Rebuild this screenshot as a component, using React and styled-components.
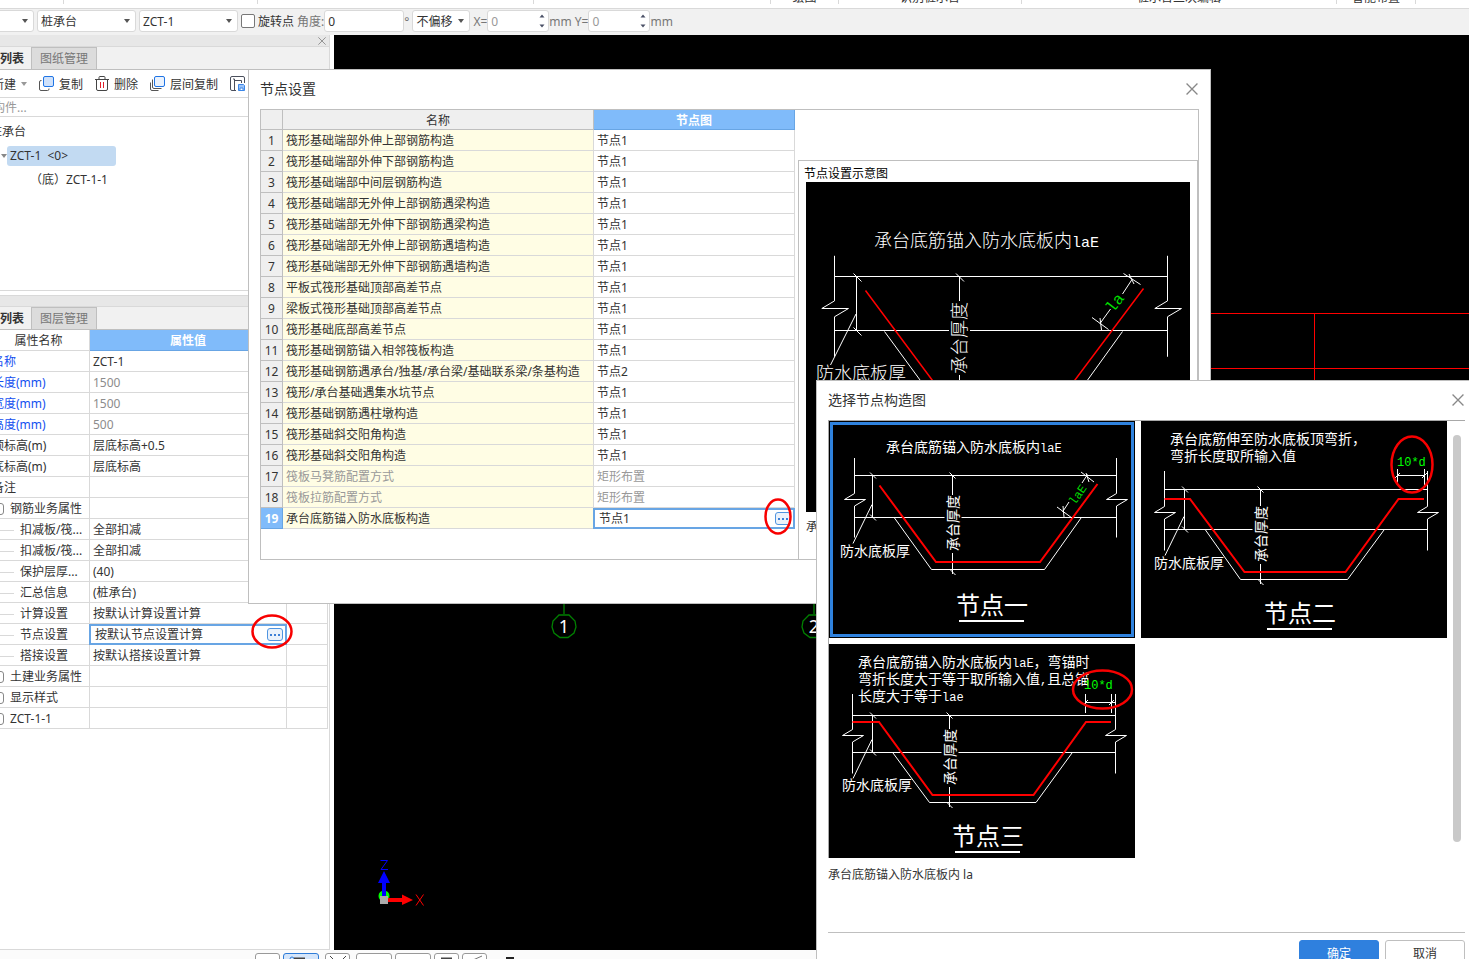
import React from "react";
import styled, { createGlobalStyle, css } from "styled-components";

const Global = createGlobalStyle`
  * { box-sizing: border-box; }
  body {
    margin: 0;
    overflow: hidden;
    background: #fff;
    color: #333;
    font: 12px/18px "Noto Sans", "Noto Sans CJK SC", sans-serif;
  }
  button, input, select { font: inherit; color: inherit; margin: 0; padding: 0; }
  button { background: none; border: 0; text-align: left; }
  svg { display: block; flex: none; }
`;

const blue = "#68a5e4";
const line = "#d9d9d9";
const frame = "#bfbfbf";

const Screen = styled.div`
  position: relative;
  height: 100vh;
  display: flex;
  flex-direction: column;
  overflow: hidden;
`;

/* ---------- ribbon captions ---------- */

const Ribbon = styled.div`
  flex: none;
  height: 9px;
  display: flex;
  align-items: flex-end;
  padding-bottom: 4px;
  overflow: hidden;
  background: #fff;
  border-bottom: 1px solid ${line};
`;

const RibbonGroup = styled.div`
  flex: 0 0 ${(p) => p.$w}px;
  height: 18px;
  text-align: center;
  line-height: 24px;
  border-right: 1px solid ${line};
  white-space: nowrap;
`;

/* ---------- option bar ---------- */

const OptionBar = styled.div`
  flex: none;
  height: 26px;
  display: flex;
  align-items: center;
  gap: 3px;
  padding-bottom: 2px;
  margin-left: -12px;
  background: #f1f1f1;
  white-space: nowrap;
`;

const SelectBox = styled.div`
  display: grid;
  align-items: center;
  width: ${(p) => p.$w}px;
  height: 22px;
  background: #fff;
  border: 1px solid ${line};
  border-radius: 3px;
  & > * { grid-area: 1 / 1; }
  svg { justify-self: end; margin-right: 5px; pointer-events: none; }
`;

const Select = styled.select`
  appearance: none;
  width: 100%;
  height: 20px;
  padding: 2px 0 0 3px;
  border: 0;
  background: transparent;
`;

const CheckBox = styled.input`
  appearance: none;
  width: 14px;
  height: 14px;
  border: 1px solid #777;
  border-radius: 2px;
  background: #fff;
`;

const Label = styled.label`
  padding-top: 2px;
  color: ${(p) => (p.$muted ? "#777" : "#333")};
`;

const Unit = styled.span`
  padding-top: 2px;
`;

const FieldGroup = styled.div`
  display: flex;
  align-items: center;
  color: #777;
`;

const Field = styled.div`
  display: flex;
  align-items: center;
  justify-content: space-between;
  width: ${(p) => p.$w}px;
  height: 22px;
  padding: 0 3px;
  background: #fff;
  border: 1px solid ${line};
  border-radius: 3px;
  color: ${(p) => (p.$muted ? "#999" : "#333")};
`;

const Input = styled.input`
  flex: 1;
  min-width: 0;
  width: 100%;
  padding-top: 1px;
  border: 0;
  outline: 0;
  background: transparent;
`;

/* ---------- workspace ---------- */

const Workspace = styled.div`
  flex: 1;
  min-height: 0;
  display: flex;
`;

const SidePanel = styled.aside`
  flex: 0 0 342px;
  margin: 0 4px 0 -12px;
  display: flex;
  flex-direction: column;
  border-right: 1px solid ${line};
  border-bottom: 1px solid ${line};
`;

const Grip = styled.div`
  flex: none;
  height: 12px;
  display: flex;
  align-items: center;
  justify-content: flex-end;
  padding-right: 3px;
  background: #e7e7e7;
  border: solid ${line};
  border-width: ${(p) => (p.$top ? "1px 0" : "0 0 1px")};
`;

const Tabs = styled.div`
  flex: none;
  display: flex;
  height: 23px;
  background: #f1f1f1;
  border-bottom: 1px solid ${frame};
`;

const Tab = styled.button`
  height: 22px;
  padding: ${(p) => (p.$active ? "2px 7px 0 12px" : "1px 8px 0")};
  font-weight: ${(p) => (p.$active ? 700 : 400)};
  color: ${(p) => (p.$active ? "#333" : "#777")};
  background: ${(p) => (p.$active ? "#f1f1f1" : "#dcdcdc")};
  border: solid ${frame};
  border-width: ${(p) => (p.$active ? "0" : "1px 1px 0")};
`;

const Tools = styled.div`
  flex: none;
  height: 28px;
  display: flex;
  align-items: center;
  gap: 12px;
  padding-left: 4px;
  border-bottom: 1px solid ${line};
  overflow: hidden;
`;

const Tool = styled.button`
  flex: none;
  display: flex;
  align-items: center;
  gap: 5px;
  white-space: nowrap;
`;

const ToolText = styled.span`
  padding-top: 2px;
`;

const Search = styled.input`
  flex: none;
  height: 19px;
  && { padding: 1px 0 0 5px; }
  border: 0;
  border-bottom: 1px solid ${line};
  outline: 0;
  &::placeholder { color: #999; opacity: 1; }
`;

const Tree = styled.div`
  flex: none;
  height: 174px;
  padding-top: 3px;
  border-bottom: 1px solid ${line};
  margin-bottom: 4px;
`;

const TreeItem = styled.div`
  display: flex;
  align-items: center;
  height: 24px;
  padding-left: ${(p) => p.$indent}px;
`;

const TreeChip = styled.span`
  width: 109px;
  padding-left: 3px;
  line-height: 20px;
  background: #c2daf2;
  border-radius: 3px;
  white-space: pre;
`;

const PropTable = styled.table`
  table-layout: fixed;
  width: 340px;
  border-collapse: separate;
  border-spacing: 0;
  white-space: nowrap;
`;

const cell = css`
  padding: 2px 0 0;
  height: 21px;
  line-height: 18px;
  font-weight: 400;
  border: solid ${line};
  border-width: 0 1px 1px 0;
`;

const highlighted = css`
  font-weight: 700;
  color: #fff;
  background: #80bbfa;
  border-color: ${blue};
`;

const PropHead = styled.th`
  ${cell}
  text-align: center;
  ${(p) => p.$active && highlighted}
`;

const PropName = styled.th`
  ${cell}
  text-align: left;
  color: ${(p) => (p.$link ? "#1450f0" : "#333")};
`;

const NameInner = styled.div`
  display: flex;
  align-items: center;
  gap: 6px;
  padding-left: 4px;
`;

const Branch = styled.span`
  width: 22px;
  border-top: 1px solid ${line};
`;

const Expander = styled.button`
  width: 12px;
  height: 12px;
  background: #fff;
  border: 1px solid #888;
  border-radius: 3px;
`;

const editingCell = css`
  padding: 0;
  border-width: 0;
`;

const PropValue = styled.td`
  ${cell}
  padding-left: 3px;
  color: ${(p) => (p.$muted ? "#8c8c8c" : "#333")};
  ${(p) => p.$editing && editingCell}
`;

const Editor = styled.div`
  position: relative;
  display: flex;
  align-items: center;
  height: 21px;
  padding: 0 2px 0 4px;
  margin-left: -1px;
  background: #fff;
  border: 2px solid ${blue};
`;

const MoreButton = styled.button`
  flex: none;
  width: 16px;
  height: 13px;
  display: flex;
  align-items: center;
  justify-content: center;
  border: 1px solid #4f94e0;
  border-radius: 3px;
  background: #ebf2fb;
`;

/* pen mark lying over the button it points at */
const Mark = styled.svg`
  position: absolute;
  top: -12px;
  right: ${(p) => p.$right}px;
  pointer-events: none;
`;

const Canvas = styled.main`
  flex: 1;
  min-width: 0;
  background: #000;
  svg { width: 100%; height: 100%; }
`;

const StatusBar = styled.footer`
  flex: none;
  height: 9px;
  display: flex;
  gap: 3px;
  padding: 3px 0 0 255px;
  overflow: hidden;
  background: #fbfbfb;
`;

const StatusButton = styled.button`
  flex: none;
  display: flex;
  justify-content: center;
  width: ${(p) => p.$w}px;
  height: 24px;
  margin-right: ${(p) => p.$after || 0}px;
  border: 1px solid ${(p) => (p.$active ? "#2e7cd8" : "#999")};
  border-radius: 3px;
  background: ${(p) => (p.$active ? "#d5e6fb" : "#fff")};
`;

/* ---------- dialogs ---------- */

const Dialog = styled.section`
  position: absolute;
  display: flex;
  flex-direction: column;
  background: #fff;
  border: 1px solid ${frame};
  padding: 0 11px;
`;

const SettingsDialog = styled(Dialog)`
  left: 248px;
  top: 69px;
  width: 963px;
  padding-bottom: 43px;
`;

const PickerDialog = styled(Dialog)`
  left: 816px;
  right: -8px;
  top: 380px;
`;

const DialogHead = styled.header`
  flex: none;
  height: 39px;
  display: flex;
  align-items: center;
  justify-content: space-between;
  padding: 0 1px 2px 0;
`;

const DialogTitle = styled.h2`
  margin: 0;
  font-size: 14px;
  font-weight: 400;
`;

const SettingsBody = styled.div`
  display: flex;
  gap: 3px;
  min-height: 451px;
  border: 1px solid ${frame};
`;

const NodeTable = styled.table`
  flex: none;
  align-self: flex-start;
  table-layout: fixed;
  width: 534px;
  border-collapse: separate;
  border-spacing: 0;
  white-space: nowrap;
`;

const NodeHead = styled.th`
  ${cell}
  height: 20px;
  line-height: 17px;
  background: #efefef;
  border-color: ${frame};
  ${(p) => p.$active && highlighted}
`;

const NodeIndex = styled.th`
  ${cell}
  text-align: center;
  background: #efefef;
  border-color: ${frame};
  ${(p) => p.$active && highlighted}
`;

const NodeName = styled.td`
  ${cell}
  padding-left: 3px;
  background: #fffde4;
  color: ${(p) => (p.$muted ? "#999" : "#333")};
`;

const NodeValue = styled.td`
  ${cell}
  padding-left: 3px;
  color: ${(p) => (p.$muted ? "#999" : "#333")};
  ${(p) => p.$editing && editingCell}
`;

const Preview = styled.div`
  flex: 1;
  min-width: 0;
  margin-top: 50px;
  padding: 3px 0 0 5px;
  border: solid ${frame};
  border-width: 1px 1px 0;
`;

const PreviewTitle = styled.div`
  height: 18px;
  line-height: 20px;
  color: #000;
`;

const PreviewFigure = styled.figure`
  margin: 0 0 0 2px;
`;

const PreviewCaption = styled.figcaption`
  line-height: 30px;
`;

const Gallery = styled.div`
  flex: none;
  display: flex;
  justify-content: space-between;
  align-items: flex-start;
  height: 438px;
  padding-right: 4px;
  overflow: hidden;
  border: solid #a8a8a8;
  border-width: 1px 0 0 1px;
`;

const Cards = styled.div`
  display: grid;
  grid-template-columns: repeat(2, 306px);
  gap: 6px;
`;

const Card = styled.button`
  background: #000;
`;

const Thumb = styled.div`
  width: 8px;
  height: 407px;
  margin-top: 14px;
  border-radius: 4px;
  background: #c9c9c9;
`;

const Note = styled.p`
  margin: 0;
  height: 74px;
  padding-top: 8px;
`;

const DialogFoot = styled.footer`
  display: flex;
  justify-content: flex-end;
  gap: 6px;
  padding: 7px 0 11px;
  border-top: 1px solid ${frame};
`;

const FootButton = styled.button`
  width: 80px;
  height: 26px;
  && { padding-top: 2px; }
  text-align: center;
  border-radius: 3px;
  border: 1px solid ${(p) => (p.$primary ? "#2f80de" : frame)};
  background: ${(p) => (p.$primary ? "#2f80de" : "#fff")};
  color: ${(p) => (p.$primary ? "#fff" : "#333")};
`;

/* ---------- small drawings ---------- */

const Caret = ({ color = "#555" }) => (
  <svg width="6" height="4" viewBox="0 0 6 4">
    <path d="M0 0h6L3 4z" fill={color} />
  </svg>
);

const Spin = () => (
  <svg width="6" height="14" viewBox="0 0 6 14">
    <path d="M0.5 3.5h5L3 0.5zM0.5 10.5h5L3 13.5z" fill="#4a5066" />
  </svg>
);

const Cross = ({ size }) => (
  <svg width={size} height={size} viewBox="0 0 11 11">
    <path d="M.5.5l10 10M10.5.5l-10 10" stroke="#888" strokeWidth="1.2" fill="none" />
  </svg>
);

const CopyIcon = ({ layered }) => (
  <svg width="15" height="15" viewBox="0 0 15 15" fill="none">
    <rect x="4.5" y=".5" width="10" height="10" rx="1.5" stroke="#1f74e4" fill={layered ? "#eaf2fd" : "#cfe1fa"} />
    {layered ? (
      <path d="M2.5 3.5v7.500a1.500 1.500 0 0 0 1.500 1.500h7.500M.5 6.500v6.500a1.500 1.500 0 0 0 1.500 1.500h6.500" stroke="#555" />
    ) : (
      <path d="M2.500 4.500H2A1.500 1.500 0 0 0 .5 6v7A1.500 1.500 0 0 0 2 14.500h6.500a1.500 1.500 0 0 0 1.500-1.500v-.5" stroke="#555" />
    )}
  </svg>
);

const TrashIcon = () => (
  <svg width="14" height="15" viewBox="0 0 14 15" fill="none">
    <path d="M0 3.500h14M4 3V1.500a1 1 0 0 1 1-1h4a1 1 0 0 1 1 1V3M1.500 3.500V13A1.500 1.500 0 0 0 3 14.500h8a1.500 1.500 0 0 0 1.500-1.500V3.500" stroke="#444" />
    <path d="M5.500 6v6M8.500 6v6" stroke="#e0202a" />
  </svg>
);

const SaveIcon = () => (
  <svg width="16" height="16" viewBox="0 0 16 16" fill="none">
    <path d="M6 14.500H2A1.500 1.500 0 0 1 .5 13V2A1.500 1.500 0 0 1 2 .5h11A1.500 1.500 0 0 1 14.500 2v5M4.500 3v11.500M4.500 4.500h7V7M3 3h1.500" stroke="#4a4f5c" />
    <path d="M8.500 8.500h5l1 1v5h-6z" fill="#9cc3f7" stroke="#3b86e8" />
    <path d="M10 12h3v2.500h-3z" fill="#fff" stroke="#3b86e8" />
  </svg>
);

const Dots = () => (
  <svg width="10" height="2" viewBox="0 0 10 2">
    <path d="M0 0h2v2H0zM4 0h2v2H4zM8 0h2v2H8z" fill="#3c7fd6" />
  </svg>
);

const RedMark = ({ w, h, right }) => (
  <Mark $right={right} width={w} height={h} viewBox={`0 0 ${w} ${h}`} fill="none">
    <ellipse cx={w / 2} cy={h / 2} rx={w / 2 - 1.5} ry={h / 2 - 1.5} stroke="#f80000" strokeWidth="2.5" />
  </Mark>
);

/* ---------- node diagrams ---------- */

const CadText = styled.text`
  font-family: "Noto Sans CJK SC", sans-serif;
  font-weight: ${(p) => (p.$light ? 300 : 400)};
  fill: ${(p) => p.$color || "#fff"};
  white-space: pre;
`;

const Mono = styled.tspan`
  font-family: "Liberation Mono", monospace;
`;

const breakMark = (x, y, s) =>
  `M${x} ${y - 41.5 * s}V${y - 6 * s}l${-10 * s} ${6 * s}h${21 * s}l${-11 * s} ${6.5 * s}V${y + 38 * s}`;

const tick = (x, y, s = 3) => `M${x - s} ${y - s}l${2 * s} ${2 * s}`;

function PreviewDrawing() {
  return (
    <svg width="384" height="330" viewBox="0 0 384 330" fill="none">
      <rect width="384" height="330" fill="#000" />
      <g stroke="#fff">
        <path d={breakMark(28.5, 126.5, 1.27)} />
        <path d={breakMark(361.5, 126.5, 1.27)} />
        <path d="M28.500 94.500H361.500M28.500 148.500H143M164 148.500H361.500M50.500 94.500V148.500M50 132L24.500 183M153.500 94.500V119M153.500 193V250" />
        <path d={tick(51.5, 95.5, 4) + tick(51.5, 149.5, 4) + tick(154, 95.5, 4)} />
        <path d="M78.500 149.500L136 228H260L316.500 149.500" />
        <path d="M326 97.500L316.500 112M304.500 127L294 141.500M317.500 91.500L334.500 102.500M323 92L328 102M286 135.500L302.500 147.500M294 136L295.500 148" />
      </g>
      <path d="M59.500 108.500L141 218H254L337.500 106.500" stroke="#f00" strokeWidth="1.5" />
      <CadText $light x="68" y="65" fontSize="18">
        承台底筋锚入防水底板内<Mono fontSize="15">laE</Mono>
      </CadText>
      <CadText $light x="10" y="198" fontSize="18">防水底板厚</CadText>
      <CadText $light transform="translate(160 192) rotate(-90)" fontSize="18">承台厚度</CadText>
      <CadText $color="#0d0" transform="translate(313 124) rotate(-52)" textAnchor="middle">
        <Mono fontSize="16">la</Mono>
      </CadText>
    </svg>
  );
}

function CardDrawing({ g, children }) {
  return (
    <svg width="306" height="217" viewBox="0 0 306 217" fill="none">
      <rect width="306" height="217" fill="#000" />
      <g stroke="#fff">
        <path d={breakMark(g.left, g.zig, 1) + breakMark(g.right, g.zig, 1)} />
        <path
          d={`M${g.left} ${g.top}H${g.right}M${g.left} ${g.low}H${g.mid - 8}M${g.mid + 9} ${g.low}H${g.right}M43.5 ${g.top}V${g.low}M43 ${g.low - 13}L24 ${g.low + 26}M${g.mid} ${g.top}V${g.textTop}M${g.mid} ${g.textTop + 58}V${g.base + 5}`}
        />
        <path d={tick(44, g.top) + tick(44, g.low) + tick(g.mid, g.top) + tick(g.mid, g.base + 3)} />
        <path d={g.slab} />
      </g>
      <path d={g.bar} stroke="#f00" strokeWidth="2" />
      <CadText x={g.labelX} y={g.labelY} fontSize="14">防水底板厚</CadText>
      <CadText transform={`translate(${g.mid + 5} ${g.textTop + 56}) rotate(-90)`} fontSize="14">承台厚度</CadText>
      <CadText x={g.titleX} y={g.titleY} fontSize="24">{g.title}</CadText>
      <path d={`M${g.titleX + 3} ${g.titleY + 7}h65`} stroke="#fff" strokeWidth="2" />
      {children}
    </svg>
  );
}

const nodeOne = {
  left: 25.5, right: 287.5, zig: 78.5, top: 54.5, low: 96.5, mid: 123.5, textTop: 74, base: 148,
  slab: "M65.5 97L102.5 148.5H215.5L252 97",
  bar: "M50.5 64.5L107 141H211L268.5 63",
  labelX: 11, labelY: 135, title: "节点一", titleX: 127, titleY: 193,
};
const nodeTwo = {
  left: 23.5, right: 286.5, zig: 91.5, top: 68.5, low: 108.5, mid: 119.5, textTop: 85, base: 158,
  slab: "M64.5 109L99.5 158.5H206.5L243 109",
  bar: "M23.5 78H49L103.5 151H204.5L257.5 78H283",
  labelX: 13, labelY: 147, title: "节点二", titleX: 123, titleY: 201,
};
const nodeThree = {
  ...nodeTwo,
  top: 71.5, mid: 120.5,
  slab: "M64 109L100.5 158.5H207L243 109",
  bar: "M23.5 78H50L103.5 151H204.5L257 78H282",
  labelY: 146, title: "节点三", titleY: 201,
};

const NodeOne = () => (
  <CardDrawing g={nodeOne}>
    <CadText x="57" y="31" fontSize="14">
      承台底筋锚入防水底板内<Mono fontSize="12">laE</Mono>
    </CadText>
    <path d="M258.5 53.5L253 62M240 81L233.5 91M252 51L265 61M257 52L260 61M228 86L243 97M234 85L235 96" stroke="#fff" />
    <CadText $color="#0d0" transform="translate(252 76) rotate(-55)" textAnchor="middle">
      <Mono fontSize="12">laE</Mono>
    </CadText>
    <rect x="2.5" y="2.5" width="301" height="212" stroke="#2f82de" strokeWidth="3" />
  </CardDrawing>
);

const NodeTwo = () => (
  <CardDrawing g={nodeTwo}>
    <CadText x="29" y="23" fontSize="14">承台底筋伸至防水底板顶弯折，</CadText>
    <CadText x="29" y="40" fontSize="14">弯折长度取所输入值</CadText>
    <path d="M256.5 48V62M283.5 48V66M256.5 54.5H283.5M254 57l5-5M281 57l5-5" stroke="#fff" />
    <CadText $color="#0f0" x="256" y="45"><Mono fontSize="12">10*d</Mono></CadText>
    <ellipse cx="271" cy="43.5" rx="20.5" ry="28" stroke="#f80000" strokeWidth="2.5" />
  </CardDrawing>
);

const NodeThree = () => (
  <CardDrawing g={nodeThree}>
    <CadText x="29" y="23" fontSize="14">
      承台底筋锚入防水底板内<Mono fontSize="12">laE</Mono>，弯锚时
    </CadText>
    <CadText x="29" y="40" fontSize="14">
      弯折长度大于等于取所输入值<Mono fontSize="12">,</Mono>且总锚
    </CadText>
    <CadText x="29" y="57" fontSize="14">
      长度大于等于<Mono fontSize="12">lae</Mono>
    </CadText>
    <path d="M256.5 50V69M282.5 50V69M256.5 58.5H286M254 61l5-5M280 61l5-5" stroke="#fff" />
    <CadText $color="#0f0" x="255" y="45"><Mono fontSize="12">10*d</Mono></CadText>
    <ellipse cx="273.5" cy="45.5" rx="29.5" ry="19" stroke="#f80000" strokeWidth="2.5" />
  </CardDrawing>
);

/* ---------- data ---------- */

const ribbonGroups = [
  [64, ""], [194, ""], [276, ""], [237, ""], [68, "绘图"], [183, "识别桩承台"], [315, "桩承台二次编辑"], [79, "智能布置"],
];

const properties = [
  { name: "名称", value: "ZCT-1", link: true },
  { name: "长度(mm)", value: "1500", link: true, muted: true },
  { name: "宽度(mm)", value: "1500", link: true, muted: true },
  { name: "高度(mm)", value: "500", link: true, muted: true },
  { name: "顶标高(m)", value: "层底标高+0.5" },
  { name: "底标高(m)", value: "层底标高" },
  { name: "备注", value: "" },
  { name: "钢筋业务属性", value: "", group: true },
  { name: "扣减板/筏...", value: "全部扣减", child: true },
  { name: "扣减板/筏...", value: "全部扣减", child: true },
  { name: "保护层厚...", value: "(40)", child: true },
  { name: "汇总信息", value: "(桩承台)", child: true },
  { name: "计算设置", value: "按默认计算设置计算", child: true },
  { name: "节点设置", value: "按默认节点设置计算", child: true, editing: true },
  { name: "搭接设置", value: "按默认搭接设置计算", child: true },
  { name: "土建业务属性", value: "", group: true },
  { name: "显示样式", value: "", group: true },
  { name: "ZCT-1-1", value: "", group: true },
];

const nodes = [
  ["筏形基础端部外伸上部钢筋构造", "节点1"],
  ["筏形基础端部外伸下部钢筋构造", "节点1"],
  ["筏形基础端部中间层钢筋构造", "节点1"],
  ["筏形基础端部无外伸上部钢筋遇梁构造", "节点1"],
  ["筏形基础端部无外伸下部钢筋遇梁构造", "节点1"],
  ["筏形基础端部无外伸上部钢筋遇墙构造", "节点1"],
  ["筏形基础端部无外伸下部钢筋遇墙构造", "节点1"],
  ["平板式筏形基础顶部高差节点", "节点1"],
  ["梁板式筏形基础顶部高差节点", "节点1"],
  ["筏形基础底部高差节点", "节点1"],
  ["筏形基础钢筋锚入相邻筏板构造", "节点1"],
  ["筏形基础钢筋遇承台/独基/承台梁/基础联系梁/条基构造", "节点2"],
  ["筏形/承台基础遇集水坑节点", "节点1"],
  ["筏形基础钢筋遇柱墩构造", "节点1"],
  ["筏形基础斜交阳角构造", "节点1"],
  ["筏形基础斜交阳角构造", "节点1"],
  ["筏板马凳筋配置方式", "矩形布置"],
  ["筏板拉筋配置方式", "矩形布置"],
  ["承台底筋锚入防水底板构造", "节点1"],
];

/* ---------- parts ---------- */

function Dropdown({ w, value, label }) {
  return (
    <SelectBox $w={w}>
      <Select aria-label={label} defaultValue={value}>
        <option>{value}</option>
      </Select>
      <Caret />
    </SelectBox>
  );
}

function Offset({ axis }) {
  return (
    <FieldGroup>
      <Label $muted htmlFor={`offset-${axis}`}>{axis}=</Label>
      <Field $w={62} $muted>
        <Input id={`offset-${axis}`} defaultValue="0" />
        <Spin />
      </Field>
      <Unit>mm</Unit>
    </FieldGroup>
  );
}

function PropertyTable() {
  return (
    <PropTable>
      <colgroup>
        <col width="102" />
        <col width="197" />
        <col width="41" />
      </colgroup>
      <thead>
        <tr>
          <PropHead>属性名称</PropHead>
          <PropHead $active>属性值</PropHead>
          <PropHead />
        </tr>
      </thead>
      <tbody>
        {properties.map((p, i) => (
          <tr key={i}>
            <PropName scope="row" $link={p.link}>
              <NameInner>
                {p.group && <Expander aria-label={`展开${p.name}`} />}
                {p.child && <Branch />}
                {p.name}
              </NameInner>
            </PropName>
            <PropValue $muted={p.muted} $editing={p.editing}>
              {p.editing ? (
                <Editor>
                  <Input aria-label={p.name} defaultValue={p.value} />
                  <MoreButton aria-label="更多"><Dots /></MoreButton>
                  <RedMark w={42} h={35} right={-8} />
                </Editor>
              ) : (
                p.value
              )}
            </PropValue>
            <PropValue />
          </tr>
        ))}
      </tbody>
    </PropTable>
  );
}

function Sidebar() {
  return (
    <SidePanel>
      <Grip><Cross size={8} /></Grip>
      <Tabs>
        <Tab $active>列表</Tab>
        <Tab>图纸管理</Tab>
      </Tabs>
      <Tools>
        <Tool><ToolText>新建</ToolText><Caret color="#999" /></Tool>
        <Tool><CopyIcon /><ToolText>复制</ToolText></Tool>
        <Tool><TrashIcon /><ToolText>删除</ToolText></Tool>
        <Tool><CopyIcon layered /><ToolText>层间复制</ToolText></Tool>
        <Tool aria-label="存档"><SaveIcon /></Tool>
      </Tools>
      <Search placeholder="构件..." aria-label="搜索构件" />
      <Tree>
        <TreeItem $indent={2}>桩承台</TreeItem>
        <TreeItem $indent={13}>
          <Caret color="#888" />
          <TreeChip>{"ZCT-1  <0>"}</TreeChip>
        </TreeItem>
        <TreeItem $indent={42}>（底）ZCT-1-1</TreeItem>
      </Tree>
      <Grip $top />
      <Tabs>
        <Tab $active>列表</Tab>
        <Tab>图层管理</Tab>
      </Tabs>
      <PropertyTable />
    </SidePanel>
  );
}

function Axis({ x, n }) {
  return (
    <g transform={`translate(${x} 591)`}>
      <path d="M0-30V-12M-5-11L5-11L11-5L12 1L10 7L4 11.5L-4 11.5L-10 7L-12 1L-11-5Z" stroke="#008000" strokeWidth="1.3" fill="none" />
      <text y="7" fontSize="18" fill="#fff" textAnchor="middle">{n}</text>
    </g>
  );
}

function Drawing() {
  return (
    <Canvas>
      <svg fill="none">
        <path d="M860 278.5H3000M860 333.5H3000M980.5 278.5V600" stroke="#f00" />
        <Axis x={230} n="1" />
        <Axis x={480} n="2" />
        <circle cx="50" cy="861" r="5.5" fill="#0f0" />
        <path d="M48 862V848H44L50 836L56 848H52V862Z" fill="#00f" />
        <path d="M54 863H68V859.5L79 865L68 870V867H54Z" fill="#f00" />
        <rect x="46" y="861" width="8" height="8" fill="#aaa" />
        <path d="M46.5 825.5H53.5L47 834.5H54" stroke="#00f" />
        <path d="M82 859.5L89.5 870.5M89.5 859.5L82 870.5" stroke="#f00" />
      </svg>
    </Canvas>
  );
}

function NodeSettings() {
  return (
    <SettingsDialog role="dialog" aria-label="节点设置">
      <DialogHead>
        <DialogTitle>节点设置</DialogTitle>
        <button aria-label="关闭"><Cross size={12} /></button>
      </DialogHead>
      <SettingsBody>
        <NodeTable>
          <colgroup>
            <col width="22" />
            <col width="311" />
            <col width="201" />
          </colgroup>
          <thead>
            <tr>
              <NodeHead />
              <NodeHead>名称</NodeHead>
              <NodeHead $active>节点图</NodeHead>
            </tr>
          </thead>
          <tbody>
            {nodes.map(([name, value], i) => {
              const editing = i === 18;
              const muted = i === 16 || i === 17;
              return (
                <tr key={i}>
                  <NodeIndex scope="row" $active={editing}>{i + 1}</NodeIndex>
                  <NodeName $muted={muted}>{name}</NodeName>
                  <NodeValue $muted={muted} $editing={editing}>
                    {editing ? (
                      <Editor>
                        <Input aria-label={name} defaultValue={value} />
                        <MoreButton aria-label="更多"><Dots /></MoreButton>
                        <RedMark w={28} h={37} right={1} />
                      </Editor>
                    ) : (
                      value
                    )}
                  </NodeValue>
                </tr>
              );
            })}
          </tbody>
        </NodeTable>
        <Preview>
          <PreviewTitle>节点设置示意图</PreviewTitle>
          <PreviewFigure>
            <PreviewDrawing />
            <PreviewCaption>承台底筋锚入防水底板内 la</PreviewCaption>
          </PreviewFigure>
        </Preview>
      </SettingsBody>
    </SettingsDialog>
  );
}

function NodePicker() {
  return (
    <PickerDialog role="dialog" aria-label="选择节点构造图">
      <DialogHead>
        <DialogTitle>选择节点构造图</DialogTitle>
        <button aria-label="关闭"><Cross size={12} /></button>
      </DialogHead>
      <Gallery>
        <Cards>
          <Card aria-pressed="true"><NodeOne /></Card>
          <Card aria-pressed="false"><NodeTwo /></Card>
          <Card aria-pressed="false"><NodeThree /></Card>
        </Cards>
        <Thumb />
      </Gallery>
      <Note>承台底筋锚入防水底板内 la</Note>
      <DialogFoot>
        <FootButton $primary>确定</FootButton>
        <FootButton>取消</FootButton>
      </DialogFoot>
    </PickerDialog>
  );
}

export default function App() {
  return (
    <Screen>
      <Global />
      <Ribbon>
        {ribbonGroups.map(([w, text], i) => (
          <RibbonGroup key={i} $w={w}>{text}</RibbonGroup>
        ))}
      </Ribbon>
      <OptionBar>
        <Dropdown w={46} value="" label="楼层" />
        <Dropdown w={99} value="桩承台" label="构件类型" />
        <Dropdown w={99} value="ZCT-1" label="构件" />
        <CheckBox id="rotate" type="checkbox" />
        <Label htmlFor="rotate">旋转点</Label>
        <FieldGroup>
          <Label $muted htmlFor="angle">角度:</Label>
          <Field $w={80}>
            <Input id="angle" defaultValue="0" />
          </Field>
          <Unit>°</Unit>
        </FieldGroup>
        <Dropdown w={58} value="不偏移" label="偏移" />
        <Offset axis="X" />
        <Offset axis="Y" />
      </OptionBar>
      <Workspace>
        <Sidebar />
        <Drawing />
      </Workspace>
      <StatusBar>
        <StatusButton $w={25} aria-label="点" />
        <StatusButton $w={36} $active $after={3} aria-label="线">
          <svg width="28" height="6" fill="none">
            <circle cx="5" cy="5" r="2" stroke="#2e7cd8" />
            <path d="M7 4.5H18" stroke="#444" strokeWidth="2" />
          </svg>
        </StatusButton>
        <StatusButton $w={25} $after={3} aria-label="交点">
          <svg width="16" height="6"><path d="M0 2L4 6M16 2L12 6" stroke="#444" /></svg>
        </StatusButton>
        <StatusButton $w={36} aria-label="垂足" />
        <StatusButton $w={36} aria-label="中点" />
        <StatusButton $w={25} aria-label="顶点">
          <svg width="14" height="6"><path d="M1 4.5H12" stroke="#444" strokeWidth="2" /></svg>
        </StatusButton>
        <StatusButton $w={25} $after={16} aria-label="坐标">
          <svg width="16" height="6"><path d="M6 6L15 2" stroke="#777" /></svg>
        </StatusButton>
        <svg width="8" height="6"><path d="M0 5H7V6" stroke="#222" strokeWidth="2" fill="none" /></svg>
      </StatusBar>
      <NodeSettings />
      <NodePicker />
    </Screen>
  );
}
